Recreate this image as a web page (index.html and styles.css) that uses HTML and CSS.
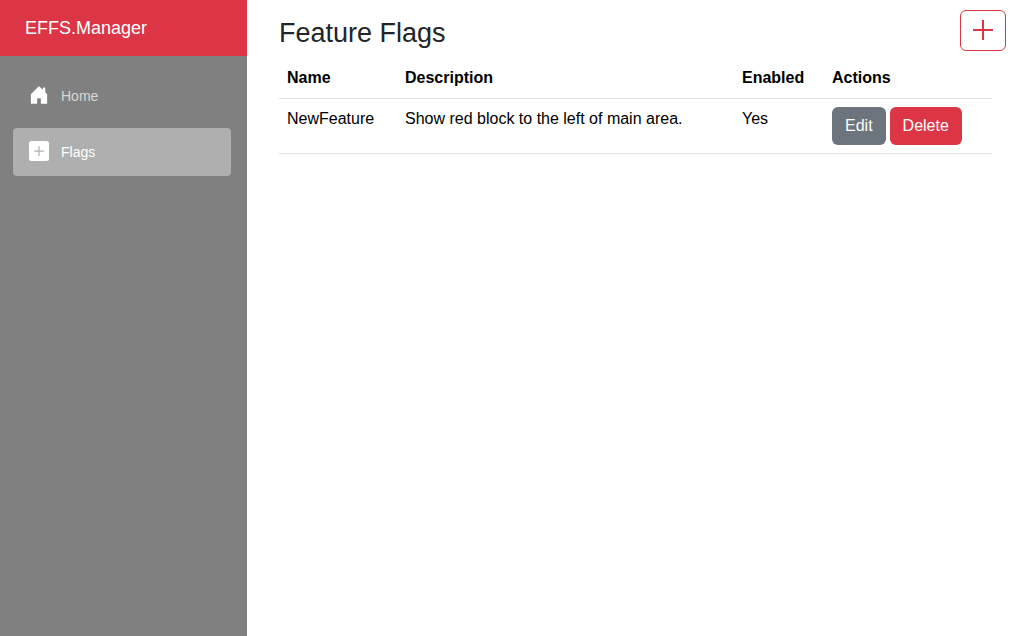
FILE: index.html
```
<!DOCTYPE html>
<html lang="en">
<head>
<meta charset="utf-8">
<meta name="viewport" content="width=device-width, initial-scale=1">
<title>EFFS.Manager</title>
<link rel="stylesheet" href="styles.css">
</head>
<body>
<div class="page">
  <aside class="sidebar">
    <header class="brand-bar"><a class="brand" href="#">EFFS.Manager</a></header>
    <nav class="nav">
      <a class="nav-link" href="#">
        <svg class="nav-icon" viewBox="0 0 16 16" aria-hidden="true"><path d="M6.5 14.5v-3.505c0-.245.25-.495.5-.495h2c.25 0 .5.25.5.5v3.5a.5.5 0 0 0 .5.5h4a.5.5 0 0 0 .5-.5v-7a.5.5 0 0 0-.146-.354L13 5.793V2.5a.5.5 0 0 0-.5-.5h-1a.5.5 0 0 0-.5.5v1.293L8.354 1.146a.5.5 0 0 0-.708 0l-6 6A.5.5 0 0 0 1.500 7.500v7a.5.5 0 0 0 .5.5h4a.5.5 0 0 0 .5-.5Z"/></svg>
        Home
      </a>
      <a class="nav-link active" href="#" aria-current="page">
        <svg class="nav-icon" viewBox="0 0 16 16" aria-hidden="true"><path d="M2 0a2 2 0 0 0-2 2v12a2 2 0 0 0 2 2h12a2 2 0 0 0 2-2V2a2 2 0 0 0-2-2H2zm6.500 4.500v3h3a.5.5 0 0 1 0 1h-3v3a.5.5 0 0 1-1 0v-3h-3a.5.5 0 0 1 0-1h3v-3a.5.5 0 0 1 1 0z"/></svg>
        Flags
      </a>
    </nav>
  </aside>
  <main class="content">
    <div class="heading">
      <h1 class="title">Feature Flags</h1>
      <button class="btn btn-add" type="button" aria-label="Add flag">
        <svg class="add-icon" viewBox="0 0 20 20" aria-hidden="true"><path d="M10 0v20M0 10h20"/></svg>
      </button>
    </div>
    <table class="table">
      <thead>
        <tr><th class="col-name" scope="col">Name</th><th class="col-description" scope="col">Description</th><th class="col-enabled" scope="col">Enabled</th><th class="col-actions" scope="col">Actions</th></tr>
      </thead>
      <tbody>
        <tr>
          <td>NewFeature</td>
          <td>Show red block to the left of main area.</td>
          <td>Yes</td>
          <td><div class="actions"><button class="btn btn-edit" type="button">Edit</button><button class="btn btn-delete" type="button">Delete</button></div></td>
        </tr>
      </tbody>
    </table>
  </main>
</div>
</body>
</html>
```

FILE: styles.css
```
* {
  box-sizing: border-box;
}

body {
  margin: 0;
  color: #212529;
  background: #fff;
  font: 16px/24px "Liberation Sans", Arial, sans-serif;
}

.page {
  display: flex;
  min-height: 100vh;
}

.sidebar {
  flex: 0 0 247px;
  background: #808080;
}

.brand-bar {
  display: flex;
  align-items: center;
  height: 56px;
  padding: 0 25px;
  background: #dc3545;
}

.brand {
  color: #fff;
  font-size: 18px;
  text-decoration: none;
}

.nav {
  display: flex;
  flex-direction: column;
  gap: 8px;
  padding: 16px 16px 0 13px;
}

.nav-link {
  display: flex;
  align-items: center;
  gap: 12px;
  height: 48px;
  padding: 0 16px;
  border-radius: 4px;
  color: #d7d7d7;
  font-size: 14px;
  text-decoration: none;
}

.nav-link.active {
  background: #afafaf;
  color: #fff;
}

.nav-icon {
  width: 20px;
  height: 20px;
  margin-bottom: 2px;
  fill: #fff;
}

.content {
  flex: 1;
  min-width: 0;
  padding: 10px 24px 0 32px;
}

.heading {
  display: flex;
  justify-content: space-between;
  height: 48px;
  margin-right: -14px;
}

.title {
  margin: 6px 0 0;
  font-size: 27px;
  font-weight: 400;
  line-height: 34px;
}

.btn {
  padding: 6px 12px;
  border: 1px solid transparent;
  border-radius: 6px;
  color: #fff;
  font: inherit;
  cursor: pointer;
}

.btn-add {
  display: flex;
  align-items: flex-start;
  justify-content: center;
  width: 46px;
  height: 41px;
  padding: 9px 12px;
  border-color: #dc3545;
  background: transparent;
}

.add-icon {
  flex: none;
  width: 20px;
  height: 20px;
  fill: none;
  stroke: #dc3545;
  stroke-width: 2;
}

.btn-edit {
  background: #6c757d;
}

.btn-delete {
  background: #dc3545;
}

.table {
  width: 100%;
  border-collapse: separate;
  border-spacing: 0;
  color: #000;
  table-layout: fixed;
}

.table th,
.table td {
  padding: 8px;
  border-bottom: 1px solid #dee2e6;
  text-align: left;
  vertical-align: top;
}

.col-name {
  width: 118px;
}

.col-enabled {
  width: 90px;
}

.col-actions {
  width: 168px;
}

.actions {
  display: flex;
  gap: 4px;
}
```
